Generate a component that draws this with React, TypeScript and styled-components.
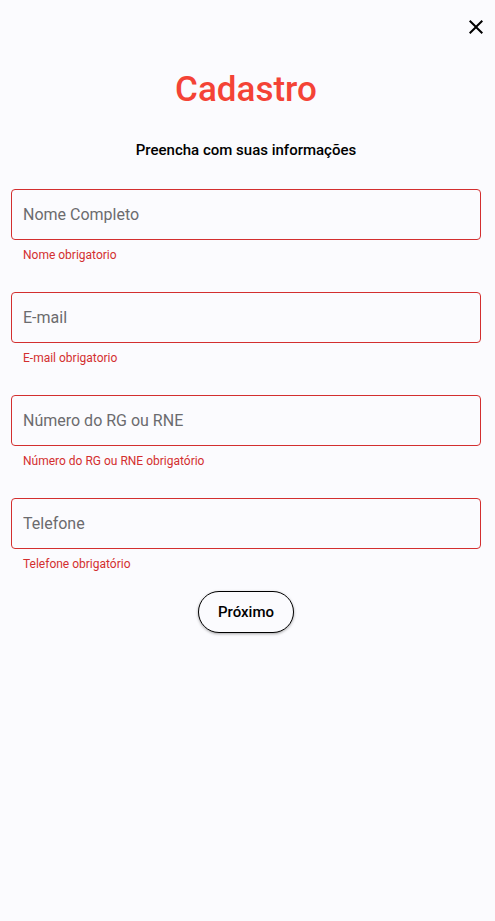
import React from "react";
import styled, { createGlobalStyle } from "styled-components";

const Global = createGlobalStyle`
  html, body { margin: 0; padding: 0; background: #fbfbfe; }
  body { font-family: Roboto, "Noto Sans", sans-serif; }
  * { box-sizing: border-box; }
`;

const Page = styled.div`
  min-height: 921px;
  background: #fbfbfe;
  display: flex;
  flex-direction: column;
`;

const Header = styled.div`
  height: 54px;
  display: flex;
  justify-content: flex-end;
  align-items: flex-start;
  padding: 15px 7px 0 0;
`;

const CloseButton = styled.button`
  width: 24px;
  height: 24px;
  padding: 0;
  border: none;
  background: transparent;
  display: flex;
  align-items: center;
  justify-content: center;
  cursor: pointer;
`;

const Content = styled.div`
  display: flex;
  flex-direction: column;
  padding: 0 14px 0 11px;
`;

const Title = styled.h1`
  margin: 15px 0 0;
  text-align: center;
  font-size: 35px;
  line-height: 42px;
  font-weight: 500;
  color: #f44336;
`;

const Subtitle = styled.p`
  margin: 30px 0 0;
  text-align: center;
  font-size: 15px;
  line-height: 18px;
  font-weight: 500;
  color: #000;
`;

const Form = styled.div`
  display: flex;
  flex-direction: column;
  margin-top: 30px;
`;

const Field = styled.div`
  display: flex;
  flex-direction: column;
  margin-bottom: 29px;
`;

const InputBox = styled.div`
  height: 51px;
  border: 1px solid #d32f2f;
  border-radius: 4px;
  display: flex;
  align-items: center;
  padding: 0 11px;
  background: #fbfbfe;
`;

const Input = styled.input`
  flex: 1;
  border: none;
  outline: none;
  background: transparent;
  font-family: Roboto, sans-serif;
  font-size: 16px;
  line-height: 20px;
  color: #1c1b1f;
  padding: 1px 0 0;
  &::placeholder { color: #6b6b6e; }
`;

const Helper = styled.div`
  margin-top: 7px;
  padding-left: 12px;
  font-size: 12px;
  line-height: 16px;
  color: #d32f2f;
`;

const ButtonRow = styled.div`
  display: flex;
  justify-content: center;
  margin-top: -10px;
`;

const NextButton = styled.button`
  width: 96px;
  height: 42px;
  border-radius: 21px;
  border: 1px solid #000;
  background: #fbfbfe;
  font-family: Roboto, sans-serif;
  font-weight: 500;
  font-size: 15px;
  color: #000;
  box-shadow: 0 1px 3px rgba(0, 0, 0, 0.35);
  cursor: pointer;
`;

const fields = [
  { placeholder: "Nome Completo", error: "Nome obrigatorio" },
  { placeholder: "E-mail", error: "E-mail obrigatorio" },
  { placeholder: "Número do RG ou RNE", error: "Número do RG ou RNE obrigatório" },
  { placeholder: "Telefone", error: "Telefone obrigatório" },
];

export default function App() {
  return (
    <Page>
      <Global />
      <Header>
        <CloseButton aria-label="Fechar">
          <svg width="24" height="24" viewBox="0 0 24 24">
            <path
              fill="#000"
              d="M19 6.41L17.59 5 12 10.59 6.41 5 5 6.41 10.59 12 5 17.59 6.41 19 12 13.41 17.59 19 19 17.59 13.41 12z"
            />
          </svg>
        </CloseButton>
      </Header>
      <Content>
        <Title>Cadastro</Title>
        <Subtitle>Preencha com suas informações</Subtitle>
        <Form>
          {fields.map((f) => (
            <Field key={f.placeholder}>
              <InputBox>
                <Input placeholder={f.placeholder} />
              </InputBox>
              <Helper>{f.error}</Helper>
            </Field>
          ))}
          <ButtonRow>
            <NextButton>Próximo</NextButton>
          </ButtonRow>
        </Form>
      </Content>
    </Page>
  );
}
